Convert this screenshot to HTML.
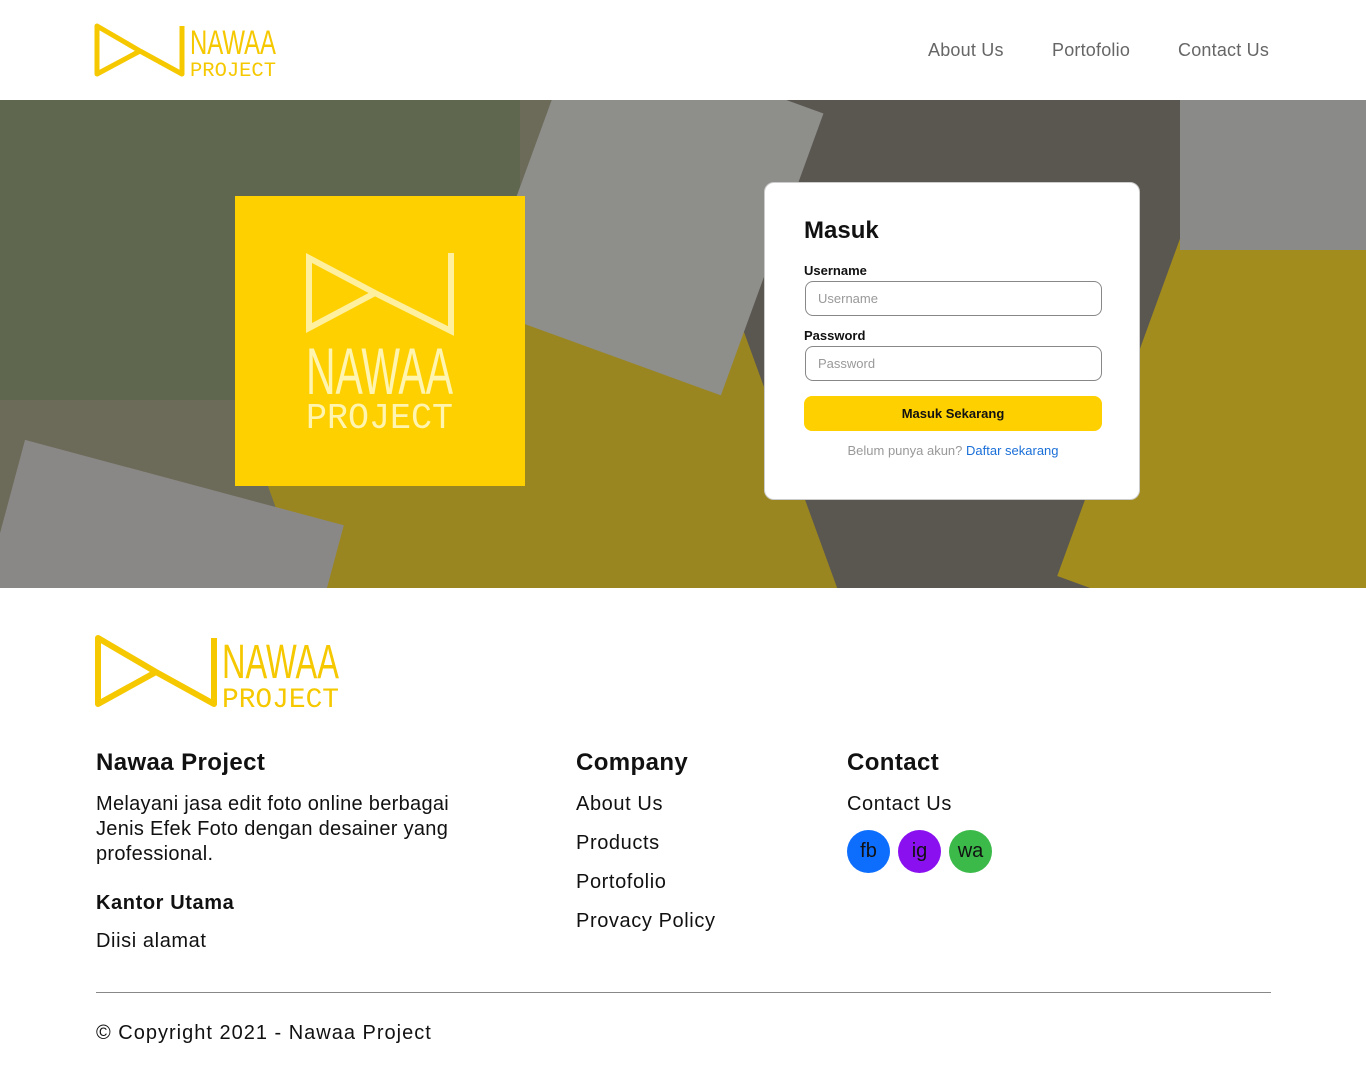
<!DOCTYPE html>
<html><head><meta charset="utf-8"><style>
*{margin:0;padding:0;box-sizing:border-box}
body{width:1366px;height:1084px;font-family:"Liberation Sans",sans-serif;background:#fff;position:relative;overflow:hidden;color:#111}
.abs{position:absolute}
nav a{position:absolute;top:40px;font-size:18px;color:#666;text-decoration:none;letter-spacing:0.2px}
.hero{left:0;top:100px;width:1366px;height:488px;background:#5a5650;overflow:hidden}
.card{left:764px;top:182px;width:376px;height:318px;background:#fff;border-radius:10px;border:1px solid #ccc}
.card label{position:absolute;left:39px;font-size:13px;font-weight:bold;color:#111}
.card .in{position:absolute;left:40px;width:297px;height:35px;border:1px solid #888;border-radius:8px;font-size:13px;color:#999;padding:9px 12px}
.f{position:absolute;font-size:20px;color:#111;letter-spacing:0.6px}
.h{position:absolute;font-size:24px;font-weight:bold;letter-spacing:0.4px}
.c{position:absolute;top:830px;width:43px;height:43px;border-radius:50%;color:#111;font-size:20px;text-align:center;line-height:43px}
</style></head><body>
<svg class="abs" style="left:94px;top:22px" width="185" height="56" viewBox="0 0 185 56">
<path d="M3,4 V52 L46,29 Z M46,29 L88,52 V4" fill="none" stroke="#f5c800" stroke-width="5" stroke-linejoin="round"/>
<text x="96" y="32" font-family="Liberation Sans Narrow,Liberation Sans" font-size="34" fill="#f5c800" textLength="86" lengthAdjust="spacingAndGlyphs">NAWAA</text>
<text x="96" y="54" font-family="Liberation Mono" font-size="20" fill="#f5c800" textLength="86" lengthAdjust="spacingAndGlyphs">PROJECT</text>
</svg>
<nav><a style="left:928px">About Us</a><a style="left:1052px">Portofolio</a><a style="left:1178px">Contact Us</a></nav>
<div class="abs hero">
<div class="abs" style="left:0;top:0;width:560px;height:488px;background:#6c6a58"></div>
<div class="abs" style="left:0;top:0;width:520px;height:300px;background:#56684a;opacity:.6"></div>
<div class="abs" style="left:300px;top:220px;width:500px;height:420px;background:#9a8620;transform:rotate(-20deg)"></div>
<div class="abs" style="left:520px;top:-40px;width:260px;height:300px;background:#8e8e8a;transform:rotate(20deg)"></div>
<div class="abs" style="left:1120px;top:120px;width:300px;height:420px;background:#a28c1e;transform:rotate(20deg)"></div>
<div class="abs" style="left:1180px;top:-20px;width:220px;height:170px;background:#8a8a88"></div>
<div class="abs" style="left:0;top:380px;width:330px;height:150px;background:#8a8886;transform:rotate(15deg)"></div>
<div class="abs" style="left:235px;top:96px;width:290px;height:290px;background:#ffd000">
<svg width="290" height="290" viewBox="0 0 290 290">
<path d="M74,62 V132 L140,97 Z M140,97 L216,135 V57" fill="none" stroke="#fff0a0" stroke-width="6"/>
<text x="71" y="198" font-family="Liberation Sans Narrow,Liberation Sans" font-size="66" fill="#fff4b0" textLength="147" lengthAdjust="spacingAndGlyphs">NAWAA</text>
<text x="71" y="232" font-family="Liberation Mono" font-size="36" fill="#fff4b0" textLength="147" lengthAdjust="spacingAndGlyphs">PROJECT</text>
</svg></div>
</div>
<div class="abs card">
<div class="abs" style="left:39px;top:34px;font-size:24px;font-weight:bold">Masuk</div>
<label style="top:80px">Username</label>
<div class="in" style="top:98px">Username</div>
<label style="top:145px">Password</label>
<div class="in" style="top:163px">Password</div>
<div class="abs" style="left:39px;top:213px;width:298px;height:35px;background:#ffd000;border-radius:8px;text-align:center;line-height:35px;font-size:13px;font-weight:bold">Masuk Sekarang</div>
<div class="abs" style="left:0;width:376px;top:260px;text-align:center;font-size:13px;color:#999">Belum punya akun? <span style="color:#1a6fd8">Daftar sekarang</span></div>
</div>
<svg class="abs" style="left:94px;top:632px" width="250" height="78" viewBox="0 0 250 78">
<path d="M4,6 V72 L62,40 Z M62,40 L120,72 V6" fill="none" stroke="#f5c800" stroke-width="6" stroke-linejoin="round"/>
<text x="128" y="46" font-family="Liberation Sans Narrow,Liberation Sans" font-size="48" fill="#f5c800" textLength="117" lengthAdjust="spacingAndGlyphs">NAWAA</text>
<text x="128" y="75" font-family="Liberation Mono" font-size="28" fill="#f5c800" textLength="117" lengthAdjust="spacingAndGlyphs">PROJECT</text>
</svg>
<div class="h" style="left:96px;top:749px">Nawaa Project</div>
<div class="f" style="left:96px;top:792px;width:380px;line-height:25px;letter-spacing:0.3px">Melayani jasa edit foto online berbagai Jenis Efek Foto dengan desainer yang professional.</div>
<div class="f" style="left:96px;top:892px;font-weight:bold">Kantor Utama</div>
<div class="f" style="left:96px;top:930px">Diisi alamat</div>
<div class="h" style="left:576px;top:749px">Company</div>
<div class="f" style="left:576px;top:793px">About Us</div>
<div class="f" style="left:576px;top:832px">Products</div>
<div class="f" style="left:576px;top:871px">Portofolio</div>
<div class="f" style="left:576px;top:910px">Provacy Policy</div>
<div class="h" style="left:847px;top:749px">Contact</div>
<div class="f" style="left:847px;top:793px">Contact Us</div>
<div class="c" style="left:847px;background:#0d6efd">fb</div>
<div class="c" style="left:898px;background:#8a10f0">ig</div>
<div class="c" style="left:949px;background:#3bba4a">wa</div>
<div class="abs" style="left:96px;top:992px;width:1175px;height:1px;background:#888"></div>
<div class="f" style="left:96px;top:1022px;letter-spacing:1px">© Copyright 2021 - Nawaa Project</div>
</body></html>
